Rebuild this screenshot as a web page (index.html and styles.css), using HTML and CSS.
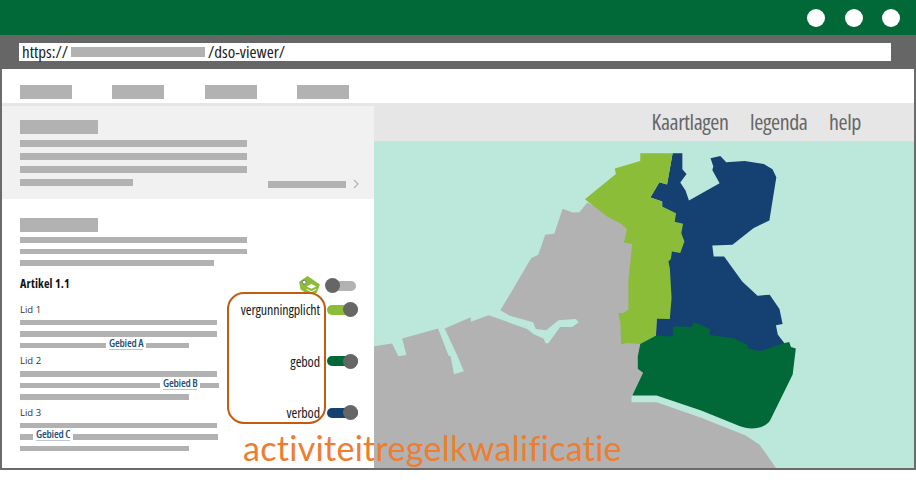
FILE: index.html
```html
<!DOCTYPE html>
<html lang="nl">
<head>
<meta charset="utf-8">
<title>DSO viewer</title>
<link rel="stylesheet" href="styles.css">
</head>
<body>
<div class="frame">
  <div class="titlebar">
    <span class="dot"></span><span class="dot"></span><span class="dot"></span>
  </div>
  <div class="addressbar">
    <div class="address">
      <span>https://</span><i class="bar url-mask"></i><span>/dso-viewer/</span>
    </div>
  </div>
  <nav class="topnav">
    <i class="bar nav-item"></i><i class="bar nav-item"></i><i class="bar nav-item"></i><i class="bar nav-item"></i>
  </nav>
  <div class="main">
    <aside class="panel">
      <section class="summary">
        <i class="bar heading"></i>
        <i class="bar line"></i>
        <i class="bar line"></i>
        <i class="bar line"></i>
        <div class="summary-foot">
          <i class="bar foot-a"></i>
          <span class="foot-right"><i class="bar foot-b"></i>
            <svg class="chevron" viewBox="0 0 6 10"><path d="M1 1l4 4-4 4" fill="none" stroke="#b5b5b5" stroke-width="1.2"/></svg>
          </span>
        </div>
      </section>
      <section class="content">
        <i class="bar heading"></i>
        <i class="bar thin wide"></i>
        <i class="bar thin wide"></i>
        <i class="bar thin mid"></i>
        <div class="article-head">
          <strong class="article-title">Artikel 1.1</strong>
          <svg class="tag" viewBox="0 0 22 20">
            <path d="M0 6 9 0l13 9-3.500 9H7L1.500 14z" fill="#8cbd38"/>
            <circle cx="5.500" cy="6.500" r="2" fill="#fff" stroke="#777" stroke-width="1"/>
            <path d="M8 11 13 8.500l5 2.500-5 2.500zM8 13.500l5 2.500 5-2.500v1L13 17 8 14.500z" fill="#fff"/>
          </svg>
          <span class="toggle off"></span>
        </div>
        <div class="lid">
          <div class="lid-text">
            <span class="lid-name">Lid 1</span>
            <i class="bar thin full"></i>
            <i class="bar thin full"></i>
            <div class="mixed"><i class="bar thin b86"></i><a class="gebied">Gebied A</a><i class="bar thin b43"></i></div>
          </div>
          <div class="qual"><span class="qual-label">vergunningplicht</span><span class="toggle lime"></span></div>
        </div>
        <div class="lid">
          <div class="lid-text">
            <span class="lid-name">Lid 2</span>
            <i class="bar thin full"></i>
            <div class="mixed"><i class="bar thin b140"></i><a class="gebied">Gebied B</a><i class="bar thin b19"></i></div>
            <i class="bar thin part"></i>
          </div>
          <div class="qual"><span class="qual-label">gebod</span><span class="toggle dark"></span></div>
        </div>
        <div class="lid">
          <div class="lid-text">
            <span class="lid-name">Lid 3</span>
            <i class="bar thin full"></i>
            <div class="mixed"><i class="bar thin b13"></i><a class="gebied">Gebied C</a><i class="bar thin b145"></i></div>
            <i class="bar thin part"></i>
          </div>
          <div class="qual"><span class="qual-label">verbod</span><span class="toggle navy"></span></div>
        </div>
      </section>
      <div class="highlight"></div>
    </aside>
    <div class="viewer">
      <div class="viewer-head">
        <span>Kaartlagen</span><span>legenda</span><span>help</span>
      </div>
      <svg class="map" viewBox="10 123 1553 983" preserveAspectRatio="none">
        <path fill="#b2b2b2" d="M10 740 62 732 80 770 103 766 91 717 194 687 224 768 230 770 240 824 268 815 248 765 213 687 288 653 288 666 340 647 450 688 470 705 497 717 503 731 511 731 545 682 580 682 598 668 590 658 540 662 505 692 475 688 467 668 400 648 373 632 462 475 482 465 502 405 528 402 552 327 580 338 600 337 623 308 800 400 790 733 768 800 783 820 750 890 750 908 822 908 950 955 1078 1008 1118 1036 1165 1106 10 1106Z"/>
        <path fill="#144072" d="M868 160 896 160 896 208 908 222 890 248 905 272 915 302 1003 250 982 210 985 200 977 175 1005 168 1022 187 1075 183 1130 192 1155 208 1166 232 1146 362 1100 385 1040 435 982 437 986 470 1016 470 1068 545 1112 588 1147 585 1175 628 1184 673 1165 677 1170 705 1190 732 1118 760 900 730 820 712 822 657 850 400 838 320 838 305 804 293 830 247 852 254Z"/>
        <path fill="#8cbd38" d="M775 160 868 160 852 254 830 247 804 293 838 305 838 320 878 340 874 366 898 372 893 400 902 425 890 460 866 455 863 478 856 485 860 505 865 595 860 658 822 657 820 708 775 733 735 730 720 735 718 670 712 640 726 640 741 630 741 540 752 433 728 428 737 388 720 372 680 350 616 298 705 222 702 206 775 183Z"/>
        <path fill="#006937" d="M775 733 820 708 868 711 870 680 920 682 930 668 975 688 975 706 1045 717 1082 735 1085 746 1118 755 1190 730 1203 727 1208 742 1222 747 1213 825 1148 963C1135 985 1095 995 1060 980L950 933 822 888 752 888 783 820 768 808 768 770Z"/>
      </svg>
    </div>
  </div>
  <div class="caption">activiteitregelkwalificatie</div>
</div>
</body>
</html>
```

FILE: styles.css
```css
* { box-sizing: border-box; }
html, body { margin: 0; padding: 0; background: #fff; }
body { width: 916px; height: 493px; overflow: hidden; font-family: "Open Sans", sans-serif; }
i { font-style: normal; }

.frame { position: relative; width: 916px; height: 470px; display: flex; flex-direction: column; border: solid #6b6b6b; border-width: 0 2px 2px 2px; }

.titlebar { height: 35px; margin: 0 -2px; padding-right: 16px; background: #006937; display: flex; justify-content: flex-end; align-items: center; gap: 19.500px; }
.dot { width: 18px; height: 18px; border-radius: 50%; background: #fff; }

.addressbar { height: 34px; margin: 0 -2px; padding: 8px 25px 8px 19px; background: #666; }
.address { height: 18px; padding-left: 3px; background: #fff; display: flex; align-items: center; font-size: 17px; font-stretch: 75%; color: #222; line-height: 18px; }
.url-mask { width: 134px; height: 10px; margin: 0 3px; }

.bar { display: block; background: #b2b2b2; }

.topnav { height: 34px; padding: 16px 0 0 18px; display: flex; gap: 40.300px; background: #fff; }
.nav-item { width: 52px; height: 14px; }

.main { flex: 1; min-height: 0; display: flex; }

.panel { position: relative; width: 371.500px; flex: none; background: #fff; border-top: 3px solid #e6e6e6; }
.summary { height: 93px; padding: 14px 0 0 18px; background: #f1f1f1; }
.heading { width: 78px; height: 14px; margin-bottom: 6px; }
.line { width: 227px; height: 7px; margin-bottom: 6px; }
.summary-foot { width: 339px; display: flex; justify-content: space-between; }
.foot-a { width: 113px; height: 7px; }
.foot-right { display: flex; align-items: center; gap: 7px; }
.foot-b { width: 78px; height: 7px; }
.chevron { width: 6px; height: 10px; }

.content { padding: 19px 0 0 18px; }
.content .heading { margin-bottom: 5px; }
.thin { height: 5.500px; margin-bottom: 6px; }
.wide { width: 227px; }
.mid { width: 194px; }
.full { width: 197px; }
.part { width: 169px; }

.article-head { display: flex; align-items: center; height: 20px; margin-top: 10px; margin-bottom: 8px; }
.article-title { width: 279px; margin-top: -4px; font-size: 12px; font-stretch: 75%; letter-spacing: 0.200px; color: #111; font-weight: 700; }
.tag { width: 21px; height: 19px; margin-right: 5px; }

.lid { display: flex; height: 51.500px; }
.lid-text { width: 207px; }
.lid-name { display: block; height: 16px; font-size: 9.500px; line-height: 12px; color: #333; }
.mixed { display: flex; align-items: center; gap: 3px; height: 5.500px; margin-bottom: 6px; }
.mixed .bar { margin: 0; }
.b86 { width: 86px; } .b43 { width: 43px; } .b140 { width: 140px; } .b19 { width: 19px; } .b13 { width: 13px; } .b145 { width: 145px; }
.gebied { flex: none; width: 34px; font-stretch: 75%; font-weight: 600; font-size: 11px; letter-spacing: -0.200px; line-height: 12px; color: #1f4e79; white-space: nowrap; border-bottom: 1px solid #b9c7d6; position: relative; top: -2px; }

.qual { width: 131px; height: 12px; display: flex; justify-content: flex-end; align-items: center; gap: 7px; }
.qual-label { font-stretch: 75%; font-size: 14px; letter-spacing: -0.100px; color: #1a1a1a; white-space: nowrap; }

.toggle { position: relative; display: block; flex: none; width: 31px; height: 10px; border-radius: 5px; background: #b2b2b2; }
.toggle::after { content: ""; position: absolute; top: -2.500px; right: 0; width: 15px; height: 15px; border-radius: 50%; background: #666; }
.toggle.off::after { right: auto; left: -6px; }
.toggle.off { width: 25px; margin-left: 6px; }
.toggle.lime { background: #8cbd38; }
.toggle.dark { background: #006937; }
.toggle.navy { background: #144072; }

.highlight { position: absolute; left: 225px; top: 186px; width: 99px; height: 132px; border: 2px solid #c55a11; border-radius: 17px; pointer-events: none; }

.viewer { flex: 1; min-width: 0; display: flex; flex-direction: column; }
.viewer-head { height: 38px; flex: none; padding: 0 53px 2px 0; background: #e6e6e6; display: flex; justify-content: flex-end; align-items: center; gap: 21.500px; font-stretch: 75%; font-size: 22px; letter-spacing: -0.400px; color: #666; }
.map { display: block; flex: 1; min-height: 0; width: 100%; background: #bbe8db; }

.caption { position: absolute; left: 241px; top: 428px; font-family: Lato, sans-serif; font-size: 34px; font-variant-ligatures: none; letter-spacing: 0.300px; line-height: 40px; color: #ed7d31; white-space: nowrap; }
```
